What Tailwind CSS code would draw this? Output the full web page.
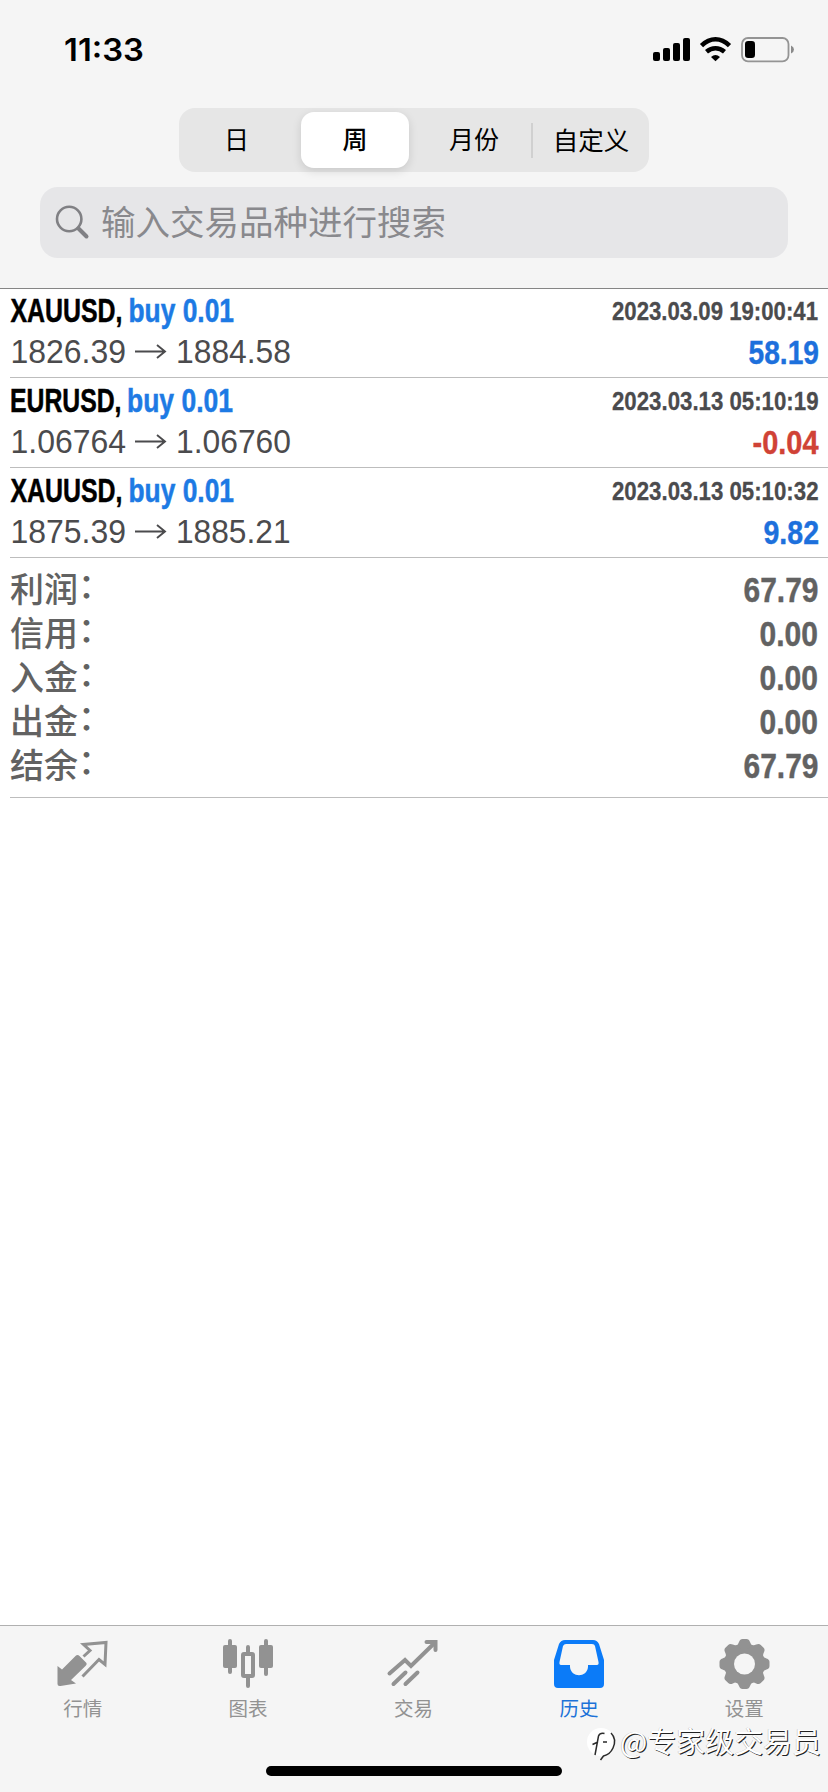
<!DOCTYPE html>
<html lang="zh-CN">
<head>
<meta charset="utf-8">
<title>历史</title>
<script src="https://cdn.jsdelivr.net/npm/@tailwindcss/browser@4"></script>
</head>
<body class="bg-white font-['Liberation_Sans','Noto_Sans_CJK_SC',sans-serif]">
<div class="flex h-[1792px] w-[828px] flex-col overflow-hidden bg-white">

  <header class="flex h-[289px] shrink-0 flex-col border-b border-[#858585] bg-[#f5f5f5]">
    <div class="flex h-[108px] items-start justify-between pt-[30px] pr-[33px] pl-[64px]">
      <svg class="h-10 w-[90px] overflow-visible" viewBox="0 0 90 40"><text x="0" y="31" textLength="80" lengthAdjust="spacingAndGlyphs" class="font-['Inter'] text-[31px] font-semibold">11:33</text></svg>
      <svg class="h-10 w-[142px]" viewBox="653 30 142 40">
        <rect x="653" y="52" width="7" height="9" rx="2"/>
        <rect x="663" y="48" width="7" height="13" rx="2"/>
        <rect x="673" y="43" width="7" height="18" rx="2"/>
        <rect x="683" y="38" width="7" height="23" rx="2"/>
        <g fill="none" stroke="#000" stroke-width="4.6">
          <path d="M701.5 45.6Q708 39.3 715.5 39.3T729.5 45.6"/>
          <path d="M706.5 51.8Q710.7 48.2 715.5 48.2T724.5 51.8"/>
        </g>
        <path d="M711 57Q715.5 53 720 57L715.5 61.2Z"/>
        <rect x="742" y="38" width="46.5" height="23.3" rx="6" fill="none" stroke="#949494" stroke-width="1.8"/>
        <rect x="745" y="41" width="10" height="17" rx="3.2"/>
        <path d="M791 45.5Q794 47 794 49.5T791 53.5Z" fill="#8a8a8a"/>
      </svg>
    </div>
    <div class="mx-auto flex h-16 w-[470px] items-center rounded-[16px] bg-[#e6e6e6] font-['Noto_Sans_CJK_SC'] text-[25px] leading-none text-black">
      <div class="w-[115px] pb-[3px] text-center">日</div>
      <div class="ml-[7px] flex h-14 w-[108px] items-center justify-center rounded-[13px] bg-white pb-[3px] font-medium shadow-[0_3px_10px_rgba(0,0,0,0.13)]">周</div>
      <div class="w-[122px] pb-[3px] pl-[8px] text-center">月份</div>
      <div class="h-[35px] w-[2px] bg-[#d0d0d0]"></div>
      <div class="w-[116px] pb-[3px] text-center text-[25.5px]">自定义</div>
    </div>
    <div class="mx-10 mt-[15px] flex h-[71px] items-center rounded-[18px] bg-[#e6e6e8] pl-[15px] text-[#89898d]">
      <svg class="size-9" viewBox="0 0 36 36" fill="none" stroke="#808084" stroke-linecap="round"><circle cx="14.2" cy="14" r="12.2" stroke-width="2.6"/><path d="M23.5 23.5L31.5 31.5" stroke-width="4"/></svg>
      <span class="ml-[10px] pb-[4px] font-['Noto_Sans_CJK_SC'] text-[34.5px] leading-none">输入交易品种进行搜索</span>
    </div>
  </header>

  <main class="flex grow flex-col pl-[10px]">
    <section class="flex h-[89px] flex-col justify-end border-b border-[#bdbdbd]">
      <div class="flex h-[89px] shrink-0 justify-between">
        <svg class="h-[89px] w-[290px] overflow-visible" viewBox="0 0 290 89">
          <text x="0.5" y="34" textLength="112" lengthAdjust="spacingAndGlyphs" class="stroke-black stroke-[0.5px] text-[33px] font-bold">XAUUSD,</text>
          <text x="118.5" y="34" textLength="105.500" lengthAdjust="spacingAndGlyphs" class="fill-[#1d7ae4] stroke-[#1d7ae4] stroke-[0.5px] text-[33px] font-bold">buy 0.01</text>
          <g class="fill-[#4b4b4d] text-[32.5px]"><text x="0.5" y="75" textLength="115.500" lengthAdjust="spacingAndGlyphs">1826.39</text><text x="166" y="75" textLength="115" lengthAdjust="spacingAndGlyphs">1884.58</text></g>
          <path d="M125 63.5H154M147 57L155 63.5L147 70" fill="none" stroke="#4b4b4d" stroke-width="1.9"/>
        </svg>
        <svg class="h-[89px] w-[230px] overflow-visible" viewBox="598 0 230 89">
          <text x="612" y="32" textLength="206" lengthAdjust="spacingAndGlyphs" class="fill-[#4b4b4d] stroke-[#4b4b4d] stroke-[0.3px] text-[26.5px] font-bold">2023.03.09 19:00:41</text>
          <text x="748.500" y="76" textLength="70.500" lengthAdjust="spacingAndGlyphs" class="fill-[#1d70dc] stroke-[#1d70dc] stroke-[0.4px] text-[33px] font-bold">58.19</text>
        </svg>
      </div>
    </section>
    <section class="h-[90px] border-b border-[#bdbdbd]">
      <div class="flex justify-between">
        <svg class="h-[89px] w-[290px] overflow-visible" viewBox="0 0 290 89">
          <text x="0" y="34" textLength="111.500" lengthAdjust="spacingAndGlyphs" class="stroke-black stroke-[0.5px] text-[33px] font-bold">EURUSD,</text>
          <text x="117" y="34" textLength="106" lengthAdjust="spacingAndGlyphs" class="fill-[#1d7ae4] stroke-[#1d7ae4] stroke-[0.5px] text-[33px] font-bold">buy 0.01</text>
          <g class="fill-[#4b4b4d] text-[32.5px]"><text x="0.5" y="75" textLength="115.500" lengthAdjust="spacingAndGlyphs">1.06764</text><text x="166" y="75" textLength="115" lengthAdjust="spacingAndGlyphs">1.06760</text></g>
          <path d="M125 63.5H154M147 57L155 63.5L147 70" fill="none" stroke="#4b4b4d" stroke-width="1.9"/>
        </svg>
        <svg class="h-[89px] w-[230px] overflow-visible" viewBox="598 0 230 89">
          <text x="612" y="32" textLength="206.500" lengthAdjust="spacingAndGlyphs" class="fill-[#4b4b4d] stroke-[#4b4b4d] stroke-[0.3px] text-[26.5px] font-bold">2023.03.13 05:10:19</text>
          <text x="752.500" y="76" textLength="66" lengthAdjust="spacingAndGlyphs" class="fill-[#d04236] stroke-[#d04236] stroke-[0.4px] text-[33px] font-bold">-0.04</text>
        </svg>
      </div>
    </section>
    <section class="h-[90px] border-b border-[#bdbdbd]">
      <div class="flex justify-between">
        <svg class="h-[89px] w-[290px] overflow-visible" viewBox="0 0 290 89">
          <text x="0.5" y="34" textLength="112" lengthAdjust="spacingAndGlyphs" class="stroke-black stroke-[0.5px] text-[33px] font-bold">XAUUSD,</text>
          <text x="118.5" y="34" textLength="105.500" lengthAdjust="spacingAndGlyphs" class="fill-[#1d7ae4] stroke-[#1d7ae4] stroke-[0.5px] text-[33px] font-bold">buy 0.01</text>
          <g class="fill-[#4b4b4d] text-[32.5px]"><text x="0.5" y="75" textLength="115.500" lengthAdjust="spacingAndGlyphs">1875.39</text><text x="166" y="75" textLength="114.500" lengthAdjust="spacingAndGlyphs">1885.21</text></g>
          <path d="M125 63.5H154M147 57L155 63.5L147 70" fill="none" stroke="#4b4b4d" stroke-width="1.9"/>
        </svg>
        <svg class="h-[89px] w-[230px] overflow-visible" viewBox="598 0 230 89">
          <text x="612" y="32" textLength="206.500" lengthAdjust="spacingAndGlyphs" class="fill-[#4b4b4d] stroke-[#4b4b4d] stroke-[0.3px] text-[26.5px] font-bold">2023.03.13 05:10:32</text>
          <text x="763.500" y="76" textLength="55.500" lengthAdjust="spacingAndGlyphs" class="fill-[#1d70dc] stroke-[#1d70dc] stroke-[0.4px] text-[33px] font-bold">9.82</text>
        </svg>
      </div>
    </section>

    <section class="h-[240px] border-b border-[#bdbdbd] pt-[9px] font-['Noto_Sans_CJK_SC'] text-[34px] leading-[44px] font-medium text-[#626262]">
      <div class="flex h-11 justify-between"><span class="-translate-y-px">利润<span class="relative -top-[4px]">：</span></span><svg class="h-11 w-[88px] overflow-visible" viewBox="740 0 88 44"><text x="743.500" y="35" textLength="75" lengthAdjust="spacingAndGlyphs" class="fill-[#626262] stroke-[#626262] stroke-[0.4px] font-['Liberation_Sans'] text-[34.5px] font-bold">67.79</text></svg></div>
      <div class="flex h-11 justify-between"><span class="-translate-y-px">信用<span class="relative -top-[4px]">：</span></span><svg class="h-11 w-[88px] overflow-visible" viewBox="740 0 88 44"><text x="759.500" y="35" textLength="58.500" lengthAdjust="spacingAndGlyphs" class="fill-[#626262] stroke-[#626262] stroke-[0.4px] font-['Liberation_Sans'] text-[34.5px] font-bold">0.00</text></svg></div>
      <div class="flex h-11 justify-between"><span class="-translate-y-px">入金<span class="relative -top-[4px]">：</span></span><svg class="h-11 w-[88px] overflow-visible" viewBox="740 0 88 44"><text x="759.500" y="35" textLength="58.500" lengthAdjust="spacingAndGlyphs" class="fill-[#626262] stroke-[#626262] stroke-[0.4px] font-['Liberation_Sans'] text-[34.5px] font-bold">0.00</text></svg></div>
      <div class="flex h-11 justify-between"><span class="-translate-y-px">出金<span class="relative -top-[4px]">：</span></span><svg class="h-11 w-[88px] overflow-visible" viewBox="740 0 88 44"><text x="759.500" y="35" textLength="58.500" lengthAdjust="spacingAndGlyphs" class="fill-[#626262] stroke-[#626262] stroke-[0.4px] font-['Liberation_Sans'] text-[34.5px] font-bold">0.00</text></svg></div>
      <div class="flex h-11 justify-between"><span class="-translate-y-px">结余<span class="relative -top-[4px]">：</span></span><svg class="h-11 w-[88px] overflow-visible" viewBox="740 0 88 44"><text x="743.500" y="35" textLength="75" lengthAdjust="spacingAndGlyphs" class="fill-[#626262] stroke-[#626262] stroke-[0.4px] font-['Liberation_Sans'] text-[34.5px] font-bold">67.79</text></svg></div>
    </section>
  </main>

  <footer class="relative flex h-[167px] shrink-0 flex-col border-t border-[#b0b0b0] bg-[#f5f5f5]">
    <nav class="grid h-[140px] grid-cols-5 pt-[10px] pr-px font-['Noto_Sans_CJK_SC'] text-[19.5px] leading-6 text-[#929292]">
      <div class="flex flex-col items-center gap-1">
        <svg class="h-[56px] w-[60px]" viewBox="52.500 1636 60 56">
          <path d="M57 1666L61.5 1669.500L75 1656Q77 1654 79 1656L85.500 1662.500Q87 1664 85 1666L70.500 1680L75.500 1683.500L60 1686Q57 1686.500 57 1684Z" fill="#929292"/>
          <path d="M83 1656.500L89.5 1650.500L83 1644.5L105.500 1642.500L104.500 1664.500L98.500 1659.500L82 1676.500" fill="none" stroke="#929292" stroke-width="3"/>
        </svg>
        <span>行情</span>
      </div>
      <div class="flex flex-col items-center gap-1">
        <svg class="h-[56px] w-[60px]" viewBox="218 1636 60 56" fill="#929292">
          <rect x="223" y="1645" width="14" height="23" rx="2"/><rect x="228" y="1639" width="4" height="35" rx="2"/>
          <rect x="259" y="1645" width="14" height="23" rx="2"/><rect x="264" y="1639" width="4" height="37" rx="2"/>
          <rect x="243" y="1654" width="10" height="22" rx="1" fill="none" stroke="#929292" stroke-width="4"/>
          <path d="M246 1653V1647Q246 1645 248 1645T250 1647V1653ZM246 1677V1686Q246 1688 248 1688T250 1686V1677Z"/>
        </svg>
        <span>图表</span>
      </div>
      <div class="flex flex-col items-center gap-1">
        <svg class="h-[56px] w-[60px]" viewBox="383.500 1636 60 56" fill="none" stroke="#929292" stroke-width="4" stroke-linecap="round">
          <path d="M390 1673.500L405.500 1660L411.500 1666L434 1644"/><path d="M427 1642H436V1650"/>
          <path d="M394 1684L406 1672.500M406 1684L418 1672.500"/>
        </svg>
        <span>交易</span>
      </div>
      <div class="flex flex-col items-center gap-1 text-[#1c72d8]">
        <svg class="h-[56px] w-[60px]" viewBox="548 1636 60 56">
          <path fill-rule="evenodd" fill="#0b7bf8" d="M564 1640H592Q596 1640 598 1644L603 1660V1684Q603 1688 599 1688H557Q553 1688 553 1684V1660L558 1644Q560 1640 564 1640ZM565 1644Q563 1644 562 1646L558.500 1662Q558 1665 560 1665H569V1667C570 1678 586 1678 587 1667V1665H596Q598 1665 597.500 1662L594 1646Q593.500 1644 591 1644Z"/>
        </svg>
        <span>历史</span>
      </div>
      <div class="flex flex-col items-center gap-1">
        <svg class="h-[56px] w-[60px]" viewBox="-30.500 -28 60 56">
          <g fill="#929292"><circle r="20.500"/>
            <path id="tooth" d="M-8.500 -17.500Q-6.500 -19 -5.500 -22Q-4.500 -25 -2 -25H2Q4.500 -25 5.500 -22Q6.500 -19 8.500 -17.500V17.500Q6.500 19 5.500 22Q4.500 25 2 25H-2Q-4.500 25 -5.500 22Q-6.500 19 -8.500 17.500Z"/>
            <use href="#tooth" transform="rotate(45)"/><use href="#tooth" transform="rotate(90)"/><use href="#tooth" transform="rotate(135)"/></g>
          <circle r="10.500" fill="#f5f5f5"/>
        </svg>
        <span>设置</span>
      </div>
    </nav>
    <div class="mx-auto h-[10px] w-[296px] rounded-full bg-black"></div>
    <svg class="absolute top-[94px] left-[580px] h-[50px] w-[248px] overflow-visible" viewBox="580 1720 248 50">
      <circle cx="601" cy="1742" r="14" fill="#fff"/>
      <path d="M604.500 1733.500Q600 1732.500 598.500 1736L595 1755M592.500 1744.500L598 1742M603 1742H607M611 1733Q617 1739 613 1748Q610 1754.500 603.500 1756L600.500 1760" fill="none" stroke="#2b2b2b" stroke-width="1.5"/>
      <text x="620" y="1753" textLength="201" lengthAdjust="spacingAndGlyphs" fill="#fff" class="font-['Noto_Sans_CJK_SC'] text-[29px] [text-shadow:1px_1px_0.5px_#222,-0.5px_-0.5px_0.5px_#bbb]">@专家级交易员</text>
    </svg>
  </footer>
</div>
</body>
</html>
